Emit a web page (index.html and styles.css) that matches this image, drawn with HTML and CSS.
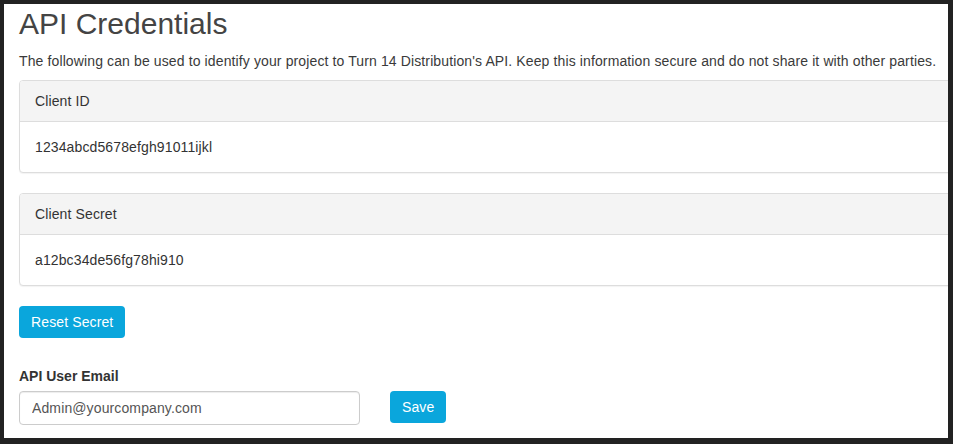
FILE: index.html
```html
<!DOCTYPE html>
<html lang="en">
<head>
<meta charset="utf-8">
<title>API Credentials</title>
<link rel="stylesheet" href="styles.css">
</head>
<body>
<div class="modal">
  <h1 class="title">API Credentials</h1>
  <p class="intro">The following can be used to identify your project to Turn 14 Distribution's API. Keep this information secure and do not share it with other parties.</p>

  <div class="panel">
    <div class="panel-heading">Client ID</div>
    <div class="panel-body">1234abcd5678efgh91011ijkl</div>
  </div>

  <div class="panel">
    <div class="panel-heading">Client Secret</div>
    <div class="panel-body">a12bc34de56fg78hi910</div>
  </div>

  <button class="btn" type="button">Reset Secret</button>

  <div class="form-group">
    <label class="label" for="email">API User Email</label>
    <div class="form-row">
      <input class="input" id="email" type="text" value="Admin@yourcompany.com">
      <button class="btn" type="button">Save</button>
    </div>
  </div>
</div>
</body>
</html>
```

FILE: styles.css
```css
html, body {
  margin: 0;
  padding: 0;
  background: #222222;
  height: 100%;
  overflow: hidden;
}

body {
  font-family: "Liberation Sans", Arial, sans-serif;
  font-size: 14px;
  line-height: 20px;
  color: #333333;
  letter-spacing: 0.12px;
}

.modal {
  box-sizing: border-box;
  margin: 4px 0 0 4px;
  width: 944px;
  height: 434px;
  background: #ffffff;
  padding: 3px 0 0 15px;
  overflow: hidden;
}

.title {
  margin: 0;
  font-size: 30px;
  line-height: 33px;
  font-weight: 400;
  color: #444444;
  letter-spacing: 0;
}

.intro {
  margin: 11px 0 9px 0;
  color: #3a3a3a;
  white-space: nowrap;
}

.panel {
  width: 960px;
  border: 1px solid #dddddd;
  border-radius: 4px;
  margin-bottom: 20px;
  box-shadow: 0 1px 1px rgba(0, 0, 0, 0.05);
  background: #ffffff;
}

.panel-heading {
  background: #f4f4f4;
  border-bottom: 1px solid #dddddd;
  padding: 10px 15px;
  border-radius: 3px 3px 0 0;
}

.panel-body {
  padding: 15px;
}

.btn {
  font-family: inherit;
  font-size: 14px;
  line-height: 20px;
  letter-spacing: 0.12px;
  color: #ffffff;
  background: #0aa6dc;
  border: none;
  border-radius: 4px;
  padding: 6px 12px;
  cursor: pointer;
  display: block;
}

.form-group {
  margin-top: 28px;
}

.label {
  display: block;
  font-weight: 700;
  margin-bottom: 5px;
  color: #333333;
  letter-spacing: 0;
}

.form-row {
  display: flex;
  align-items: flex-start;
  gap: 30px;
}

.input {
  box-sizing: border-box;
  width: 341px;
  height: 34px;
  padding: 6px 12px;
  font-family: inherit;
  font-size: 14px;
  letter-spacing: 0.12px;
  color: #555555;
  border: 1px solid #cccccc;
  border-radius: 4px;
  box-shadow: inset 0 1px 1px rgba(0, 0, 0, 0.075);
  outline: none;
}
```
